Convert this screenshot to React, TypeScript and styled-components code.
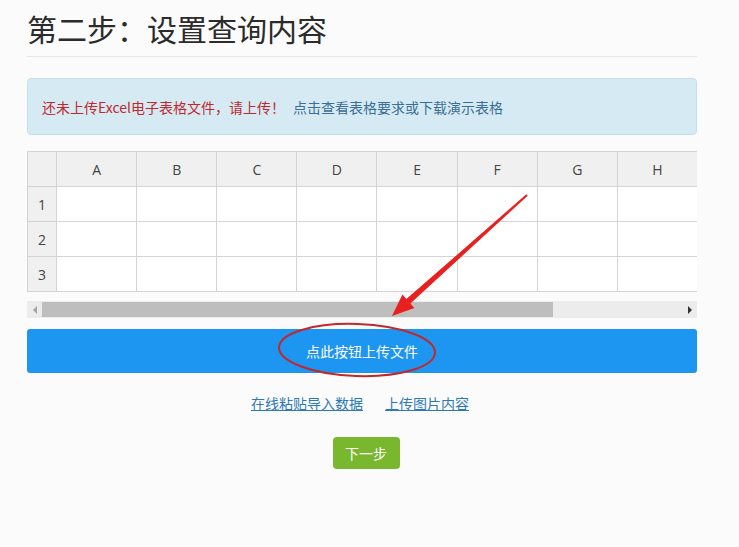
import styled, { createGlobalStyle } from "styled-components";

const GlobalStyle = createGlobalStyle`
  html, body {
    margin: 0;
    padding: 0;
    background: #fbfbfb;
  }
  body {
    font-family: "Noto Sans", "Noto Sans CJK SC", sans-serif;
    color: #333;
  }
`;

const Page = styled.div`
  position: relative;
  width: 739px;
  height: 547px;
  overflow: hidden;
`;

const Container = styled.div`
  width: 670px;
  margin-left: 27px;
  padding-top: 8px;
`;

const Title = styled.h2`
  margin: 0;
  padding-bottom: 8px;
  font-size: 30px;
  font-weight: 400;
  line-height: 40px;
  color: #2b2b2b;
  font-family: "Noto Sans CJK SC", sans-serif;
  border-bottom: 1px solid #e8e8e8;
`;

const Alert = styled.div`
  margin-top: 21px;
  height: 55px;
  display: flex;
  align-items: center;
  padding: 0 14px;
  background: #d6eaf4;
  border: 1px solid #c3e1ea;
  border-radius: 4px;
  font-size: 14px;
  font-family: "Noto Sans CJK SC", sans-serif;
`;

const Warn = styled.span`
  color: #c0282d;
`;

const InfoLink = styled.span`
  color: #3a6f93;
  margin-left: 8px;
`;

const Sheet = styled.div`
  margin-top: 16px;
  width: 670px;
  overflow: hidden;
`;

const Grid = styled.table`
  border-collapse: collapse;
  table-layout: fixed;
  width: 671px;
  font-family: "Open Sans", "Noto Sans", sans-serif;
  font-size: 14px;
  color: #444;
`;

const Cell = styled.td<{ $head?: boolean; $w?: number }>`
  width: ${(p) => p.$w ?? 79}px;
  height: 34px;
  padding: 0;
  border: 1px solid #d4d4d4;
  background: ${(p) => (p.$head ? "#f0f0f0" : "#fff")};
  text-align: center;
`;

const Scrollbar = styled.div`
  margin-top: 9px;
  height: 17px;
  display: flex;
  align-items: center;
  background: #ececec;
`;

const Arrow = styled.div<{ $dir: "left" | "right" }>`
  width: 15px;
  display: flex;
  justify-content: center;
  &::before {
    content: "";
    border-top: 4px solid transparent;
    border-bottom: 4px solid transparent;
    ${(p) =>
      p.$dir === "left"
        ? "border-right: 4px solid #a3a3a3;"
        : "border-left: 4px solid #333;"}
  }
`;

const Thumb = styled.div`
  width: 511px;
  height: 15px;
  background: #bebebe;
`;

const Spacer = styled.div`
  flex: 1;
`;

const UploadButton = styled.button`
  display: block;
  width: 670px;
  height: 44px;
  margin-top: 11px;
  border: none;
  border-radius: 3px;
  background: #1d96f1;
  color: #fff;
  font-size: 14px;
  font-family: "Noto Sans CJK SC", sans-serif;
`;

const Links = styled.div`
  display: flex;
  justify-content: center;
  gap: 22px;
  margin-top: 20px;
  padding-right: 4px;
  font-size: 14px;
  font-family: "Noto Sans CJK SC", sans-serif;
`;

const TextLink = styled.a`
  color: #2b79b7;
  text-decoration: underline;
`;

const NextRow = styled.div`
  display: flex;
  justify-content: center;
  margin-top: 24px;
`;

const NextButton = styled.button`
  width: 67px;
  height: 32px;
  margin-left: 8px;
  border: none;
  border-radius: 4px;
  background: #78b72e;
  color: #fff;
  font-size: 14px;
  font-family: "Noto Sans CJK SC", sans-serif;
`;

const Markup = styled.svg`
  position: absolute;
  left: 0;
  top: 0;
  pointer-events: none;
`;

const columns = ["A", "B", "C", "D", "E", "F", "G", "H"];

export default function App() {
  return (
    <Page>
      <GlobalStyle />
      <Container>
        <Title>第二步：设置查询内容</Title>
        <Alert>
          <Warn>还未上传Excel电子表格文件，请上传！</Warn>
          <InfoLink>点击查看表格要求或下载演示表格</InfoLink>
        </Alert>
        <Sheet>
          <Grid>
            <tbody>
              <tr>
                <Cell $head $w={28} />
                {columns.map((c) => (
                  <Cell key={c} $head>
                    {c}
                  </Cell>
                ))}
              </tr>
              {[1, 2, 3].map((r) => (
                <tr key={r}>
                  <Cell $head $w={28}>
                    {r}
                  </Cell>
                  {columns.map((c) => (
                    <Cell key={c} />
                  ))}
                </tr>
              ))}
            </tbody>
          </Grid>
        </Sheet>
        <Scrollbar>
          <Arrow $dir="left" />
          <Thumb />
          <Spacer />
          <Arrow $dir="right" />
        </Scrollbar>
        <UploadButton>点此按钮上传文件</UploadButton>
        <Links>
          <TextLink>在线粘贴导入数据</TextLink>
          <TextLink>上传图片内容</TextLink>
        </Links>
        <NextRow>
          <NextButton>下一步</NextButton>
        </NextRow>
      </Container>
      <Markup width="739" height="547">
        <ellipse
          cx="357"
          cy="350"
          rx="78"
          ry="26"
          fill="none"
          stroke="#c3262b"
          strokeWidth="2"
          transform="rotate(2 357 350)"
        />
        <polygon
          points="392,316 402.4,294.6 406.4,299.1 526.3,194.3 527.7,195.7 410.4,303.5 414.4,308"
          fill="#e8201f"
        />
      </Markup>
    </Page>
  );
}
